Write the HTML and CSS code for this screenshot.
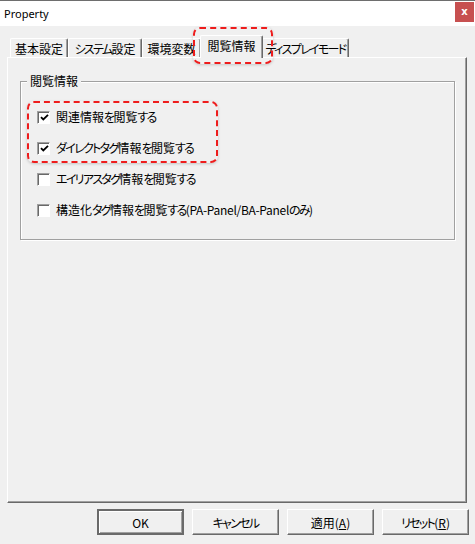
FILE: index.html
```html
<!DOCTYPE html>
<html lang="ja">
<head>
<meta charset="utf-8">
<title>Property</title>
<link rel="stylesheet" href="styles.css">
</head>
<body>
<div class="window">
  <div class="titlebar">
    <span class="title">Property</span>
    <span class="close">x</span>
  </div>
  <div class="tabs">
    <div class="tab t1">基本設定</div>
    <div class="tab t2"><span class="k">システム</span>設定</div>
    <div class="tab t3">環境変数</div>
    <div class="tab t4 active">閲覧情報</div>
    <div class="tab t5"><span class="k">ディスプレイモード</span></div>
  </div>
  <div class="panel">
    <div class="group">
      <div class="legend">閲覧情報</div>
      <label class="row"><span class="cb checked"><svg viewBox="0 0 9 9" width="9" height="9"><path d="M1 4.2 L3.3 6.5 L8 1.8" fill="none" stroke="#000" stroke-width="1.8"/></svg></span><span>関連情報<span class="k">を</span>閲覧<span class="k">する</span></span></label>
      <label class="row"><span class="cb checked"><svg viewBox="0 0 9 9" width="9" height="9"><path d="M1 4.2 L3.3 6.5 L8 1.8" fill="none" stroke="#000" stroke-width="1.8"/></svg></span><span><span class="k">ダイレクトタグ</span>情報<span class="k">を</span>閲覧<span class="k">する</span></span></label>
      <label class="row"><span class="cb"></span><span><span class="k">エイリアスタグ</span>情報<span class="k">を</span>閲覧<span class="k">する</span></span></label>
      <label class="row"><span class="cb"></span><span>構造化<span class="k">タグ</span>情報<span class="k">を</span>閲覧<span class="k">する</span><span class="lat">(PA-Panel/BA-Panel</span><span class="k">のみ</span><span class="lat">)</span></span></label>
    </div>
  </div>
  <div class="buttons">
    <button class="btn default">OK</button>
    <button class="btn"><span class="k">キャンセル</span></button>
    <button class="btn">適用(<u>A</u>)</button>
    <button class="btn"><span class="k">リセット</span>(<u>R</u>)</button>
  </div>
  <div class="mark mark-tab"></div>
  <div class="mark mark-rows"></div>
</div>
</body>
</html>
```
FILE: styles.css
```css
* { box-sizing: border-box; }
html, body { margin: 0; padding: 0; }
body {
  width: 475px;
  height: 544px;
  background: #f0f0f0;
  font-family: "Noto Sans CJK JP", "Noto Sans", sans-serif;
  font-feature-settings: "palt";
  font-size: 12px;
  color: #000;
  overflow: hidden;
}
.k { letter-spacing: -1.7px; }
.lat { letter-spacing: -0.3px; }
.window {
  position: relative;
  width: 475px;
  height: 544px;
}
.titlebar {
  height: 26px;
  background: #fff;
  border-top: 1px solid #6e6e6e;
  display: flex;
  align-items: center;
  justify-content: space-between;
  padding-left: 4px;
  padding-right: 1px;
}
.title {
  font-family: "Noto Sans", sans-serif;
  font-size: 11px;
  color: #000;
  margin-top: -1px;
}
.close {
  width: 19px;
  height: 20px;
  background: #c75050;
  color: #fff;
  font-family: "DejaVu Sans", sans-serif;
  font-weight: bold;
  font-size: 10px;
  display: flex;
  align-items: center;
  justify-content: center;
  margin-top: -3px;
  line-height: 1;
}
.tabs {
  display: flex;
  align-items: flex-end;
  height: 22px;
  margin-top: 9px;
  padding-left: 10px;
  position: relative;
  z-index: 2;
}
.tab {
  height: 19px;
  background: #f0f0f0;
  border-top: 1px solid #fff;
  border-left: 1px solid #fff;
  border-right: 1px solid #696969;
  box-shadow: inset -1px 0 0 #a0a0a0;
  border-top-left-radius: 2px;
  border-top-right-radius: 2px;
  display: flex;
  align-items: center;
  justify-content: center;
  white-space: nowrap;
  line-height: 1;
  padding-top: 1px;
}
.t1 { width: 58px; }
.t2 { width: 74px; }
.t3 { width: 59px; margin-right: -1px; }
.t4 { width: 63px; }
.t5 { width: 87px; margin-left: -1px; }
.tab.active {
  height: 23px;
  margin-bottom: -1px;
  position: relative;
  z-index: 3;
  padding-bottom: 3px;
}
.panel {
  margin-left: 7px;
  width: 460px;
  height: 446px;
  border-top: 1px solid #fff;
  border-left: 1px solid #fff;
  border-right: 1px solid #696969;
  border-bottom: 1px solid #696969;
  box-shadow: inset -1px -1px 0 #a0a0a0;
  padding: 23px 0 0 12px;
  position: relative;
  z-index: 1;
}
.group {
  position: relative;
  width: 435px;
  height: 159px;
  border: 1px solid #a0a0a0;
  box-shadow: 1px 1px 0 #fff, inset 1px 1px 0 #fff;
  padding: 25px 0 0 16px;
  display: flex;
  flex-direction: column;
  gap: 11px;
}
.legend {
  position: absolute;
  top: -9px;
  left: 6px;
  background: #f0f0f0;
  padding: 0 3px;
  line-height: 16px;
}
.row {
  display: flex;
  align-items: center;
  gap: 6px;
  height: 20px;
  line-height: 1;
  white-space: nowrap;
}
.cb {
  width: 13px;
  height: 13px;
  background: #fff;
  border-top: 1px solid #a0a0a0;
  border-left: 1px solid #a0a0a0;
  border-right: 1px solid #fff;
  border-bottom: 1px solid #fff;
  box-shadow: inset 1px 1px 0 #696969;
  display: flex;
  align-items: center;
  justify-content: center;
  flex: none;
}
.cb svg { margin: 1px 0 0 1px; }
.buttons {
  display: flex;
  justify-content: flex-end;
  gap: 8px;
  padding-right: 6px;
  margin-top: 6px;
}
.btn {
  width: 87px;
  height: 26px;
  background: #f0f0f0;
  font-family: "Noto Sans CJK JP", "Noto Sans", sans-serif;
  font-feature-settings: "palt";
  font-size: 12px;
  color: #000;
  border-top: 1px solid #fff;
  border-left: 1px solid #fff;
  border-right: 1px solid #696969;
  border-bottom: 1px solid #696969;
  box-shadow: inset -1px -1px 0 #a0a0a0;
  padding: 0;
  margin: 0;
}
.btn.default {
  border: 2px solid #6a6a6a;
  box-shadow: inset 1px 1px 0 #fff, inset -1px -1px 0 #a0a0a0;
}
.mark {
  position: absolute;
  border: 2px dashed #ee1c1c;
  border-radius: 7px;
  box-shadow: 0 1px 3px rgba(0,0,0,0.18);
  z-index: 10;
}
.mark-tab {
  left: 193px;
  top: 27px;
  width: 80px;
  height: 37px;
}
.mark-rows {
  left: 27px;
  top: 101px;
  width: 191px;
  height: 62px;
}
```
